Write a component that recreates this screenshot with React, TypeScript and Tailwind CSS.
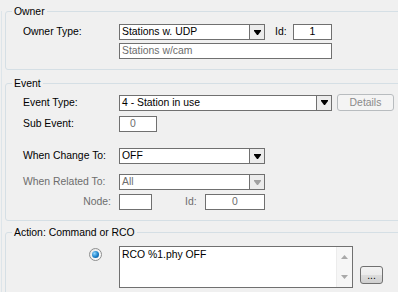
import React from "react";

const FONT = { fontFamily: '"Liberation Sans", Arial, sans-serif' };

function Arrow({ disabled }: { disabled?: boolean }) {
  return (
    <svg width="7" height="5" viewBox="0 0 7 5">
      <path d="M0 0h7v1l-3 4h-1l-3-4z" fill={disabled ? "#a0a0a0" : "#000"} />
    </svg>
  );
}

function Combo({ w, text, disabled }: { w: string; text: string; disabled?: boolean }) {
  return (
    <div className={`${w} h-[16px] flex border border-[#707070] bg-white`}>
      <div className={`flex-1 pl-[2px] leading-[14px] ${disabled ? "text-[#6d6d6d]" : "text-black"}`}>{text}</div>
      <div className="w-[15px] border-l border-[#707070] bg-[#ececec] flex items-center justify-center">
        <Arrow disabled={disabled} />
      </div>
    </div>
  );
}

function Box({ w, text, gray, center, className }: { w: string; text?: string; gray?: boolean; center?: boolean; className?: string }) {
  return (
    <div
      className={`${w} h-[16px] border border-[#707070] bg-white leading-[14px] ${center ? "text-center" : "pl-[2px]"} ${gray ? "text-[#6d6d6d]" : "text-black"} ${className ?? ""}`}
    >
      {text}
    </div>
  );
}

function Group({ title, className, children }: { title: string; className?: string; children: React.ReactNode }) {
  return (
    <div className={`w-[420px] border border-[#d5dfe5] rounded-[3px] ${className ?? ""}`}>
      <div className="-mt-[7px] ml-[6px] px-[2px] w-fit bg-[#f0f0f0] leading-[13px] text-black">{title}</div>
      {children}
    </div>
  );
}

export default function App() {
  return (
    <div className="w-[398px] h-[292px] overflow-hidden bg-[#f0f0f0] pt-[10px] text-[10.4px]" style={FONT}>
      <div className="ml-[1px] pl-[3px] border-l border-[#dde5ea] h-[400px]">
        {/* Owner */}
        <Group title="Owner" className="mt-[1px] pb-[10px]">
          <div className="pl-[17px]">
            <div className="mt-[6px] flex items-center">
              <div className="w-[96px]">Owner Type:</div>
              <Combo w="w-[146px]" text="Stations w. UDP" />
              <div className="w-[18px] ml-[10px]">Id:</div>
              <Box w="w-[39px]" text="1" center />
            </div>
            <div className="mt-[3px] flex items-center">
              <div className="w-[96px]" />
              <Box w="w-[213px]" text="Stations w/cam" gray />
            </div>
          </div>
        </Group>

        {/* Event */}
        <Group title="Event" className="mt-[13px] pb-[10px]">
          <div className="pl-[17px]">
            <div className="mt-[4px] flex items-center">
              <div className="w-[96px]">Event Type:</div>
              <Combo w="w-[213px]" text="4 - Station in use" />
              <div className="ml-[5px] w-[57px] h-[17px] rounded-[3px] border border-[#b8bcbf] bg-[#f4f4f4] text-[#8a8a8a] text-center leading-[15px]">
                Details
              </div>
            </div>
            <div className="mt-[5px] flex items-center">
              <div className="w-[96px]">Sub Event:</div>
              <Box w="w-[38px]" text="0" gray className="pl-[10px]" />
            </div>
            <div className="mt-[16px] flex items-center">
              <div className="w-[96px]">When Change To:</div>
              <Combo w="w-[146px]" text="OFF" />
            </div>
            <div className="mt-[10px] flex items-center">
              <div className="w-[96px] text-[#6d6d6d]">When Related To:</div>
              <Combo w="w-[146px]" text="All" disabled />
            </div>
            <div className="mt-[4px] flex items-center">
              <div className="w-[96px] text-right pr-[8px] text-[#6d6d6d]">Node:</div>
              <Box w="w-[33px]" />
              <div className="w-[20px] ml-[33px] text-[#6d6d6d]">Id:</div>
              <Box w="w-[60px]" text="0" gray center />
            </div>
          </div>
        </Group>

        {/* Action */}
        <Group title="Action: Command or RCO" className="mt-[11px]">
          <div className="pl-[17px]">
            <div className="mt-[7px] flex items-start">
              <div className="w-[96px] flex justify-end pr-[17px] pt-[2px]">
                <div className="w-[13px] h-[13px] rounded-full border border-[#8e8f8f] bg-gradient-to-br from-[#e6e6e6] to-[#ffffff] flex items-center justify-center">
                  <div className="w-[7px] h-[7px] rounded-full bg-[radial-gradient(circle_at_35%_35%,#8fd6ff,#1a7fc8_55%,#0b4d8c)]" />
                </div>
              </div>
              <div className="w-[234px] h-[42px] border border-[#707070] bg-white flex">
                <div className="flex-1 pl-[2px] pt-[1px] leading-[13px]">RCO %1.phy OFF</div>
                <div className="w-[16px] bg-[#f6f6f6] border-l border-[#ececec] flex flex-col justify-between items-center py-[8px]">
                  <svg width="7" height="4" viewBox="0 0 7 4">
                    <path d="M3.5 0L7 4H0z" fill="#a9a9a9" />
                  </svg>
                  <svg width="7" height="4" viewBox="0 0 7 4">
                    <path d="M0 0h7L3.5 4z" fill="#a9a9a9" />
                  </svg>
                </div>
              </div>
              <div className="ml-[7px] mt-[20px] w-[23px] h-[18px] rounded-[3px] border border-[#707070] bg-[linear-gradient(#f2f2f2_0%,#ebebeb_50%,#dddddd_50%,#cfcfcf_100%)] text-center leading-[18px] text-black">
                ...
              </div>
            </div>
            <div className="mt-[4px] flex items-start">
              <div className="w-[96px]" />
              <Combo w="w-[128px]" text="" />
              <div className="ml-[5px] w-[59px] h-[18px] rounded-[3px] border border-[#707070] bg-[#ececec]" />
            </div>
          </div>
        </Group>
      </div>
    </div>
  );
}
